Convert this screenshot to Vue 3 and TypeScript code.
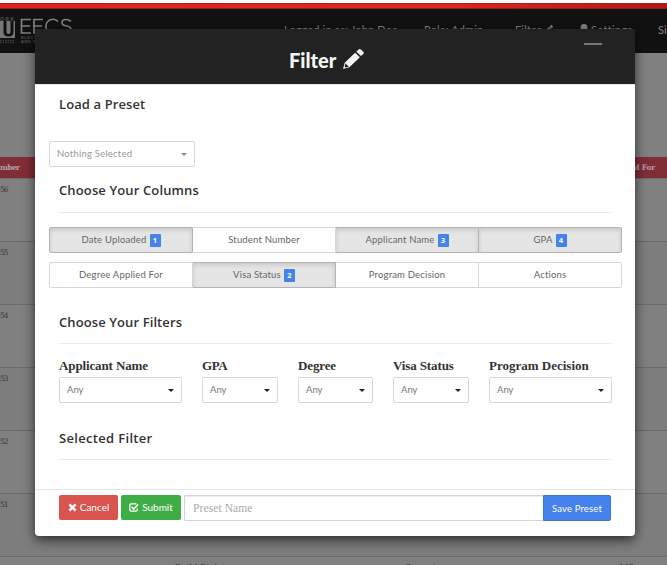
<script setup lang="ts">
interface Column { name: string; cls: string; order?: number }

const navItems = [
  { text: 'Logged in as: John Doe', cls: 'nav-user' },
  { text: 'Role: Admin', cls: 'nav-role' },
]
const rowIds: string[] = ['56', '55', '54', '53', '52', '51']
const columnRows: Column[][] = [
  [
    { name: 'Date Uploaded', cls: 'c-date', order: 1 },
    { name: 'Student Number', cls: 'c-student' },
    { name: 'Applicant Name', cls: 'c-applicant', order: 3 },
    { name: 'GPA', cls: 'c-gpa', order: 4 },
  ],
  [
    { name: 'Degree Applied For', cls: 'c-degree' },
    { name: 'Visa Status', cls: 'c-visa', order: 2 },
    { name: 'Program Decision', cls: 'c-program' },
    { name: 'Actions', cls: 'c-actions' },
  ],
]
const filters = [
  { name: 'Applicant Name', cls: 'f-applicant' },
  { name: 'GPA', cls: 'f-gpa' },
  { name: 'Degree', cls: 'f-degree' },
  { name: 'Visa Status', cls: 'f-visa' },
  { name: 'Program Decision', cls: 'f-program' },
]
</script>

<template>
  <div class="page">
    <div class="red-strip"></div>
    <nav class="navbar">
      <svg class="logo" width="74" height="36" viewBox="0 0 74 36">
        <rect x="0" y="12" width="15" height="17" fill="#777" />
        <path d="M3.500 12v11q0 4.500 5 4.500t5-4.500V12h-3v11q0 2-2 2t-2-2V12z" fill="#111" />
        <text x="0" y="11.500" class="logo-tiny" textLength="14">ORK</text>
        <path d="M0 31.500h15M0 33.500h15" stroke="#3d3d3d" stroke-width="1.500" stroke-dasharray="1.500 1" />
        <g fill="none" stroke="#808080" stroke-width="1.700">
          <path d="M31 10.500h-9.500v13.500H31M22 17h8M43 10.500h-9V24h9M34 17h8M58 12.500a7 7 0 1 0 0 9.500M71 12.500q-2-2-5-2-4 0-4 3t4.500 3.500q4.500.500 4.500 4t-5 3.500q-3 0-5-2" />
        </g>
        <text x="21" y="29.500" class="logo-sub" textLength="48">ELECTRICAL ENGIN</text>
        <text x="21" y="34" class="logo-sub" textLength="48">AND COMPUTER SCI</text>
      </svg>
      <span v-for="item in navItems" :key="item.text" :class="['nav-link', item.cls]">{{ item.text }}</span>
      <span class="nav-link nav-filter">Filter
        <svg width="9" height="9" viewBox="0 0 20 20"><path d="M0 20l1.500-6L11 4.500l4.500 4.500L6 18.500zM12.300 3.200L15 .500q1-1 2 0L19.500 3q1 1 0 2l-2.700 2.700z" fill="#808080" /></svg>
      </span>
      <span class="nav-link nav-settings">
        <svg width="8" height="10" viewBox="0 0 8 10"><path d="M4 0q3.500 0 3.500 3.500Q7.500 6 5.500 7L8 8v2H0V8l2.500-1Q.500 6 .500 3.500.500 0 4 0z" fill="#808080" /></svg>
        Settings</span>
      <span class="nav-link nav-sign">Sign Out</span>
    </nav>
    <div class="spacer"></div>
    <div class="table-head"><span>mber</span><span class="head-right">d For</span></div>
    <div v-for="id in rowIds" :key="id" class="table-row">{{ id }}</div>
    <div class="table-last"><span>Build Biology</span><span>Spanning</span><span>MSc</span></div>

    <section class="modal">
      <header class="modal-head">
        <h2>Filter</h2>
        <svg class="pencil" width="21" height="20" viewBox="0 0 21 20"><path d="M0 20l1.700-6.200L12.100 3.800l4.800 4.400L6.400 18.300zM13.300 2.700L15.600.600q1.200-1.100 2.500.100l2 1.900q1.300 1.200.100 2.300L18 7.100z" fill="#f4f4f4" /><path d="M2.500 14.500l3.300 3.200-3 .9-1.200-1.200z" fill="#222" /></svg>
        <span class="minimize"></span>
      </header>
      <div class="modal-body">
        <h4 class="title t-load">Load a Preset</h4>
        <button class="select preset"><span>Nothing Selected</span><i class="caret"></i></button>
        <h4 class="title t-columns">Choose Your Columns</h4>
        <hr />
        <div v-for="(row, i) in columnRows" :key="i" class="btn-group">
          <button v-for="col in row" :key="col.name" :class="['col-btn', { active: col.order }]">
            <span :class="col.cls">{{ col.name }}</span><b v-if="col.order" class="label">{{ col.order }}</b>
          </button>
        </div>
        <h4 class="title t-filters">Choose Your Filters</h4>
        <hr />
        <div class="filters">
          <div v-for="f in filters" :key="f.name" class="filter">
            <label :class="f.cls">{{ f.name }}</label>
            <button class="select"><span>Any</span><i class="caret"></i></button>
          </div>
        </div>
        <h4 class="title t-selected">Selected Filter</h4>
        <hr />
      </div>
      <footer class="modal-foot">
        <button class="btn cancel">
          <svg width="9" height="9" viewBox="0 0 9 9"><path d="M2.300.500l2.200 2.200L6.700.500 8.500 2.300 6.300 4.500l2.200 2.200-1.800 1.800-2.200-2.200-2.200 2.200L.500 6.700l2.200-2.200L.500 2.300z" fill="#fff" /></svg>
          <span>Cancel</span>
        </button>
        <button class="btn submit">
          <svg width="10" height="9" viewBox="0 0 10 9"><path d="M7.500.900H2Q.800.900.800 2v5q0 1.200 1.200 1.200h5Q8.200 8.200 8.200 7V5.500" fill="none" stroke="#fff" stroke-width="1.200" /><path d="M2.600 3.800L4.700 6 9.200 1.400" fill="none" stroke="#fff" stroke-width="1.700" /></svg>
          <span>Submit</span>
        </button>
        <div class="input-group">
          <input type="text" placeholder="Preset Name" />
          <button class="save"><span>Save Preset</span></button>
        </div>
      </footer>
    </section>
  </div>
</template>

<style>
body { margin: 0; overflow: hidden; background: #808080; }
</style>

<style scoped>
* { box-sizing: border-box; }
button { margin: 0; font-family: inherit; }
.page { position: relative; width: 667px; height: 565px; overflow: hidden; background: #808080; font-family: Lato, "Open Sans", sans-serif; border-top: 3px solid #fff; }
.red-strip { height: 6px; background: linear-gradient(90deg, #df2521 0, #dc2421 70%, #b31616 100%); border-top: 1px solid #a9201d; border-bottom: 1px solid #80201d; }
.navbar { display: flex; height: 44px; background: #111; color: #808080; font-size: 11px; line-height: 41px; white-space: nowrap; overflow: hidden; }
.logo { flex: none; }
.logo-tiny { font: bold 5px "Liberation Sans", sans-serif; fill: #555; }
.logo-sub { font: bold 4px "Liberation Sans", sans-serif; fill: #555; }
.nav-link { flex: none; letter-spacing: .15px; }
.nav-user { width: 140px; margin-left: 210px; }
.nav-role { width: 91px; }
.nav-filter { width: 65px; }
.nav-settings { width: 78px; letter-spacing: .3px; }
.spacer { height: 104px; }
.table-head { display: flex; justify-content: space-between; height: 22px; padding-right: 12px; background: #812d38; border-bottom: 1px solid #6d6d6d; color: #b0a0a2; font: bold 7.500px/21px "DejaVu Serif", serif; letter-spacing: -.65px; }
.head-right { letter-spacing: -.2px; }
.table-row { height: 63px; padding-top: 4px; border-bottom: 1px solid #6a6a6a; color: #403038; font: 7.5px/14px "DejaVu Serif", serif; letter-spacing: -.9px; }
.table-row:nth-of-type(odd) { background: #7d7d7d; }
.table-last { display: flex; padding: 5px 0 0 175px; gap: 173px; color: #333; font: 8.500px/12px "DejaVu Serif", serif; white-space: nowrap; }

.modal { position: absolute; left: 35px; top: 26px; width: 600px; height: 507px; display: flex; flex-direction: column; background: #fff; border-radius: 0 0 4px 4px; box-shadow: 0 4px 12px rgba(0, 0, 0, .65); }
.modal-head { position: relative; flex: none; display: flex; height: 56px; padding: 18px 0 0 254px; gap: 4px; background: #222; border-bottom: 1px solid #e5e5e5; }
.pencil { margin-top: 2px; }
h2 { margin: 0; width: 50px; color: #f4f4f4; font: 900 20px/27px Lato, sans-serif; letter-spacing: 0; }
.minimize { position: absolute; left: 549px; top: 14px; width: 18px; height: 2px; background: #777; }
.modal-body { height: 404px; padding: 9px 23px 0 24px; }
.title { margin: 0; height: 20px; color: #333; font: 600 13px/20px "Open Sans", sans-serif; white-space: nowrap; }
.t-load { letter-spacing: .1px; }
.t-columns { margin-top: 13px; letter-spacing: .13px; }
.t-filters { margin-top: 24px; letter-spacing: .1px; }
.t-selected { margin-top: 25px; letter-spacing: .32px; }
hr { height: 1px; margin: 11px 0 0; border: 0; background: #eaeaea; }
.t-columns + hr { margin-top: 12px; }
.select { display: flex; align-items: center; justify-content: space-between; width: 100%; height: 26px; padding: 0 7px; background: #fff; border: 1px solid #d6d6d6; border-radius: 2px; color: #777; font-size: 9.500px; }
.select span { position: relative; top: -.5px; }
.preset { width: 146px; margin: 27px 0 0 -10px; color: #999; letter-spacing: .22px; }
.caret { width: 0; border: 3px solid transparent; border-top-color: #222; border-bottom: 0; }
.preset .caret { border-top-color: #888; }
.btn-group { display: grid; grid-template-columns: 144px 143px 143px 143px; width: 573px; margin: 14px 0 0 -10px; }
.btn-group + .btn-group { margin-top: 9px; }
.col-btn { display: flex; align-items: center; justify-content: center; gap: 3px; height: 26px; padding: 0 0 1px; background: #fff; border: 1px solid #d5d5d5; border-left-width: 0; color: #666; font-size: 9.500px; letter-spacing: .18px; }
.col-btn:first-child { border-left-width: 1px; border-radius: 2px 0 0 2px; }
.col-btn:last-child { border-radius: 0 2px 2px 0; }
.col-btn.active { background: #e5e5e5; border-color: #b5b5b5; box-shadow: inset 0 2px 4px rgba(0, 0, 0, .13); }
.label { width: 11px; height: 13px; margin-top: 2px; border-radius: 1px; background: #4582ec; color: #fff; font: 700 7.5px/13px "Open Sans", sans-serif; text-align: center; }
.filters { display: grid; grid-template-columns: 123px 76px 75px 76px 123px; gap: 20px; margin-top: 13px; }
.filter label { display: block; height: 20px; color: #333; font: 700 13px/17px "Liberation Serif", serif; letter-spacing: -.12px; white-space: nowrap; }
.filter .f-gpa { letter-spacing: -.4px; }
.filter .f-program { letter-spacing: 0; }
.modal-foot { display: flex; height: 47px; padding: 5px 24px 0; gap: 3px; border-top: 1px solid #e5e5e5; }
.btn { display: flex; align-items: center; justify-content: center; gap: 3px; height: 25px; padding: 0 0 1px; border: 0; border-radius: 2px; color: #fff; font-size: 10px; }
.cancel { width: 59px; background: #d9534f; }
.submit { width: 60px; background: #3fad46; }
.input-group { display: flex; width: 427px; height: 26px; }
input { width: 359px; padding: 0 8px; border: 1px solid #d5d5d5; border-right: 0; border-radius: 2px 0 0 2px; box-shadow: inset 0 1px 1px rgba(0, 0, 0, .08); font: 11.500px "Liberation Serif", serif; letter-spacing: .1px; outline: 0; }
input::placeholder { color: #aaa; opacity: 1; }
.save { width: 68px; padding: 0; border: 1px solid #3876d0; border-radius: 0 2px 2px 0; background: #4582ec; color: #fff; font-size: 9.500px; letter-spacing: .15px; }
</style>
